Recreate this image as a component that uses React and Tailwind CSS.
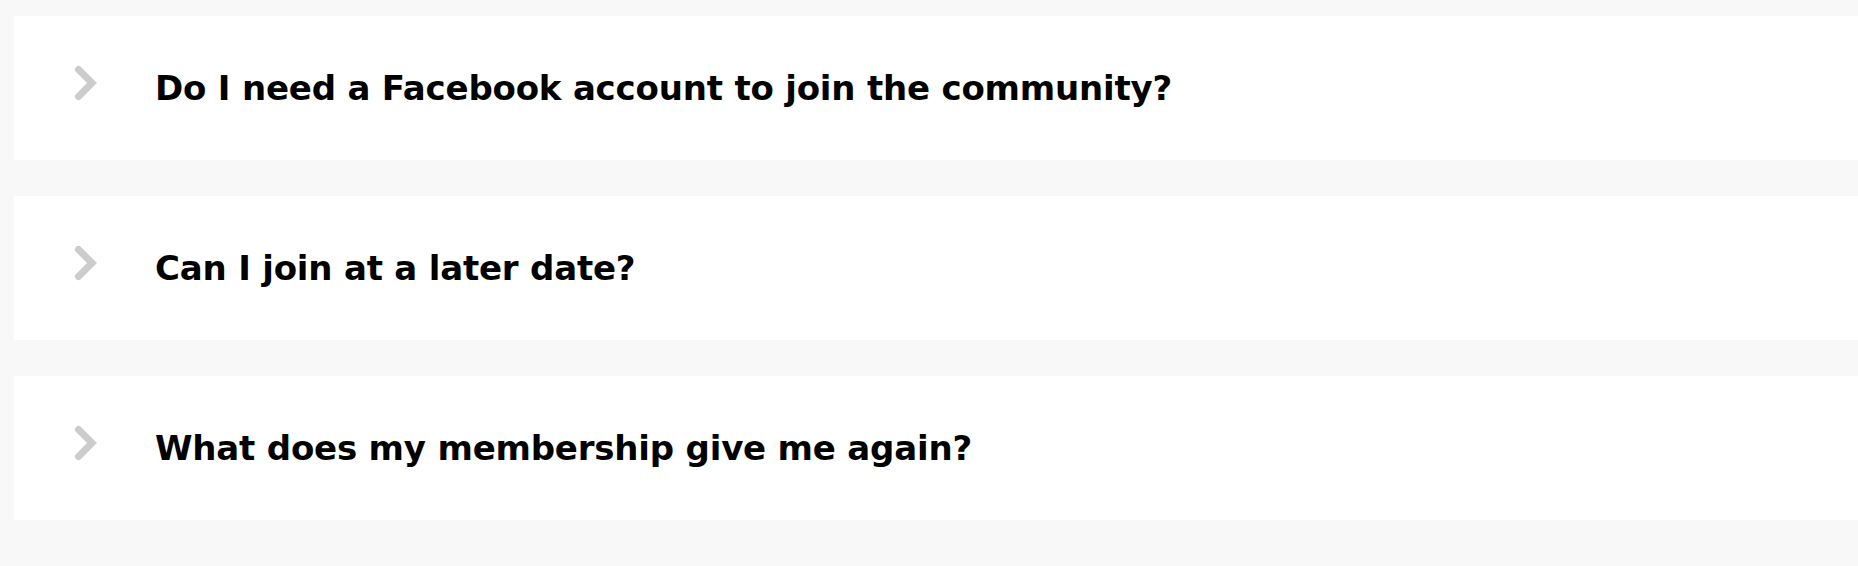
export default function App() {
  const items = [
    "Do I need a Facebook account to join the community?",
    "Can I join at a later date?",
    "What does my membership give me again?",
  ];
  return (
    <div className="min-h-[566px] w-full bg-[#f8f8f8] pt-4 pl-[14px]" style={{ fontFamily: '"DejaVu Sans", sans-serif' }}>
      {items.map((q) => (
        <div key={q} className="mb-9 flex h-[144px] items-center bg-white pl-[60px]">
          <svg width="24" height="36" viewBox="0 0 24 36" className="mt-[-11px] shrink-0">
            <polyline points="4.5,4.5 18,18 4.5,31.5" fill="none" stroke="#cccccc" strokeWidth="7" strokeLinecap="round" strokeLinejoin="miter" />
          </svg>
          <div className="ml-[57px] text-[34px] font-bold leading-none tracking-[-0.2px] text-black">{q}</div>
        </div>
      ))}
    </div>
  );
}
